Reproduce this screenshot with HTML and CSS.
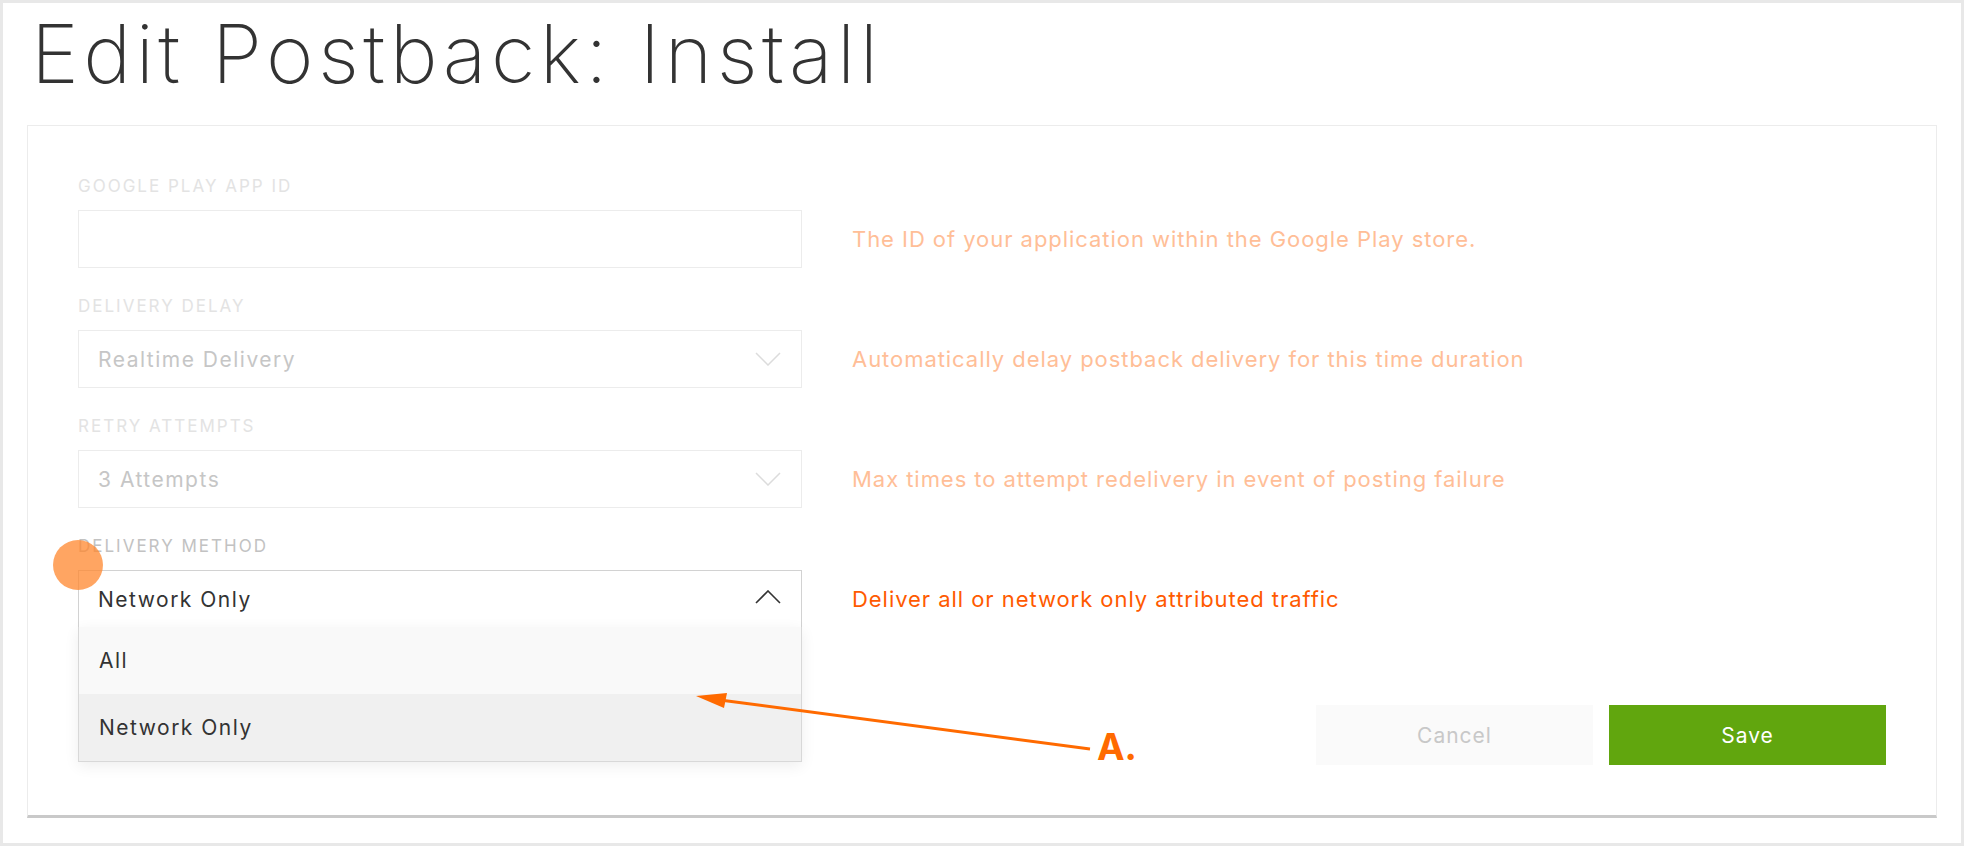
FILE: index.html
```html
<!DOCTYPE html>
<html>
<head>
<meta charset="utf-8">
<link rel="stylesheet" href="styles.css">
</head>
<body>
<div class="page">
  <h1 class="title">Edit Postback: Install</h1>
  <div class="card">
    <div class="rows">
      <div class="row">
        <div class="label">GOOGLE PLAY APP ID</div>
        <div class="control"></div>
        <div class="help">The ID of your application within the Google Play store.</div>
      </div>
      <div class="row">
        <div class="label">DELIVERY DELAY</div>
        <div class="control select">
          <span class="value">Realtime Delivery</span>
          <svg class="chev" width="26" height="14" viewBox="0 0 26 14"><path d="M1 1 L13 13 L25 1" fill="none" stroke="#dcdcdc" stroke-width="1.5"/></svg>
        </div>
        <div class="help">Automatically delay postback delivery for this time duration</div>
      </div>
      <div class="row">
        <div class="label">RETRY ATTEMPTS</div>
        <div class="control select">
          <span class="value">3 Attempts</span>
          <svg class="chev" width="26" height="14" viewBox="0 0 26 14"><path d="M1 1 L13 13 L25 1" fill="none" stroke="#dcdcdc" stroke-width="1.5"/></svg>
        </div>
        <div class="help">Max times to attempt redelivery in event of posting failure</div>
      </div>
      <div class="row active">
        <div class="label">DELIVERY METHOD</div>
        <div class="control select open">
          <span class="value">Network Only</span>
          <svg class="chev" width="26" height="14" viewBox="0 0 26 14"><path d="M1 13 L13 1 L25 13" fill="none" stroke="#333" stroke-width="1.6"/></svg>
          <div class="menu">
            <div class="opt">All</div>
            <div class="opt hover">Network Only</div>
          </div>
        </div>
        <div class="help">Deliver all or network only attributed traffic</div>
      </div>
    </div>
    <div class="actions">
      <button class="btn cancel">Cancel</button>
      <button class="btn save">Save</button>
    </div>
    <div class="dot"></div>
    <svg class="arrow" width="410" height="70" viewBox="0 0 410 70">
      <line x1="30" y1="10" x2="400" y2="59" stroke="#ff6a00" stroke-width="3"/>
      <polygon points="6,6 37,3 34,18" fill="#ff6a00"/>
    </svg>
    <div class="mark">A.</div>
  </div>
</div>
</body>
</html>
```
FILE: styles.css
```css
html, body {
  margin: 0;
  padding: 0;
  background: #fff;
}
body {
  font-family: Inter, "Liberation Sans", sans-serif;
}
.page {
  box-sizing: border-box;
  width: 1964px;
  height: 846px;
  border: 3px solid #e8e8e8;
  padding: 11px 24px 0 24px;
}
.title {
  margin: 0 0 30px 4px;
  font-size: 81px;
  line-height: 81px;
  font-weight: 200;
  color: #333;
  letter-spacing: 4.5px;
}
.card {
  position: relative;
  border: 1px solid #ececec;
  border-bottom: 3px solid #c9c9c9;
  padding: 50px 50px 50px 50px;
  background: #fff;
}
.row {
  display: grid;
  grid-template-columns: 724px 1fr;
  grid-template-rows: 20px 58px;
  row-gap: 14px;
  column-gap: 50px;
  margin-bottom: 28px;
}
.label {
  grid-column: 1;
  grid-row: 1;
  font-size: 17px;
  line-height: 20px;
  color: #e3e3e3;
  letter-spacing: 2px;
}
.active .label {
  color: #c2c2c2;
}
.control {
  grid-column: 1;
  grid-row: 2;
  box-sizing: border-box;
  height: 58px;
  border: 1px solid #ececec;
  position: relative;
}
.select {
  display: flex;
  align-items: center;
  justify-content: space-between;
  padding: 0 20px 0 19px;
}
.value {
  font-size: 21px;
  letter-spacing: 1.5px;
  color: #c6c6c6;
}
.open {
  border-color: #d2d2d2;
}
.open .value {
  color: #333;
}
.open .chev {
  margin-top: -4px;
}
.help {
  grid-column: 2;
  grid-row: 2;
  align-self: center;
  font-size: 22px;
  letter-spacing: 0.95px;
  color: #ffbe97;
}
.active .help {
  color: #ff5a00;
}
.menu {
  position: absolute;
  top: 100%;
  left: -1px;
  right: -1px;
  border: 1px solid #d8d8d8;
  border-top: none;
  box-shadow: 0 4px 14px rgba(0, 0, 0, 0.07);
  z-index: 2;
}
.opt {
  box-sizing: border-box;
  height: 67px;
  display: flex;
  align-items: center;
  padding-left: 20px;
  font-size: 21px;
  letter-spacing: 1.5px;
  color: #333;
  background: #f9f9f9;
}
.opt.hover {
  background: #f0f0f0;
}
.actions {
  display: flex;
  justify-content: flex-end;
  gap: 16px;
  margin-top: 77px;
}
.btn {
  width: 277px;
  height: 60px;
  border: none;
  font-family: Inter, "Liberation Sans", sans-serif;
  font-size: 21px;
  letter-spacing: 1px;
}
.cancel {
  background: #fafafa;
  color: #c8c8c8;
}
.save {
  background: #61a60e;
  color: #fff;
}
.dot {
  position: absolute;
  left: 25px;
  top: 414px;
  width: 50px;
  height: 50px;
  border-radius: 50%;
  background: rgba(255, 135, 45, 0.75);
  z-index: 3;
}
.arrow {
  position: absolute;
  left: 662px;
  top: 564px;
  z-index: 3;
}
.mark {
  position: absolute;
  left: 1069px;
  top: 602px;
  font-size: 37px;
  line-height: 37px;
  font-weight: 700;
  color: #ff6a00;
}
```
